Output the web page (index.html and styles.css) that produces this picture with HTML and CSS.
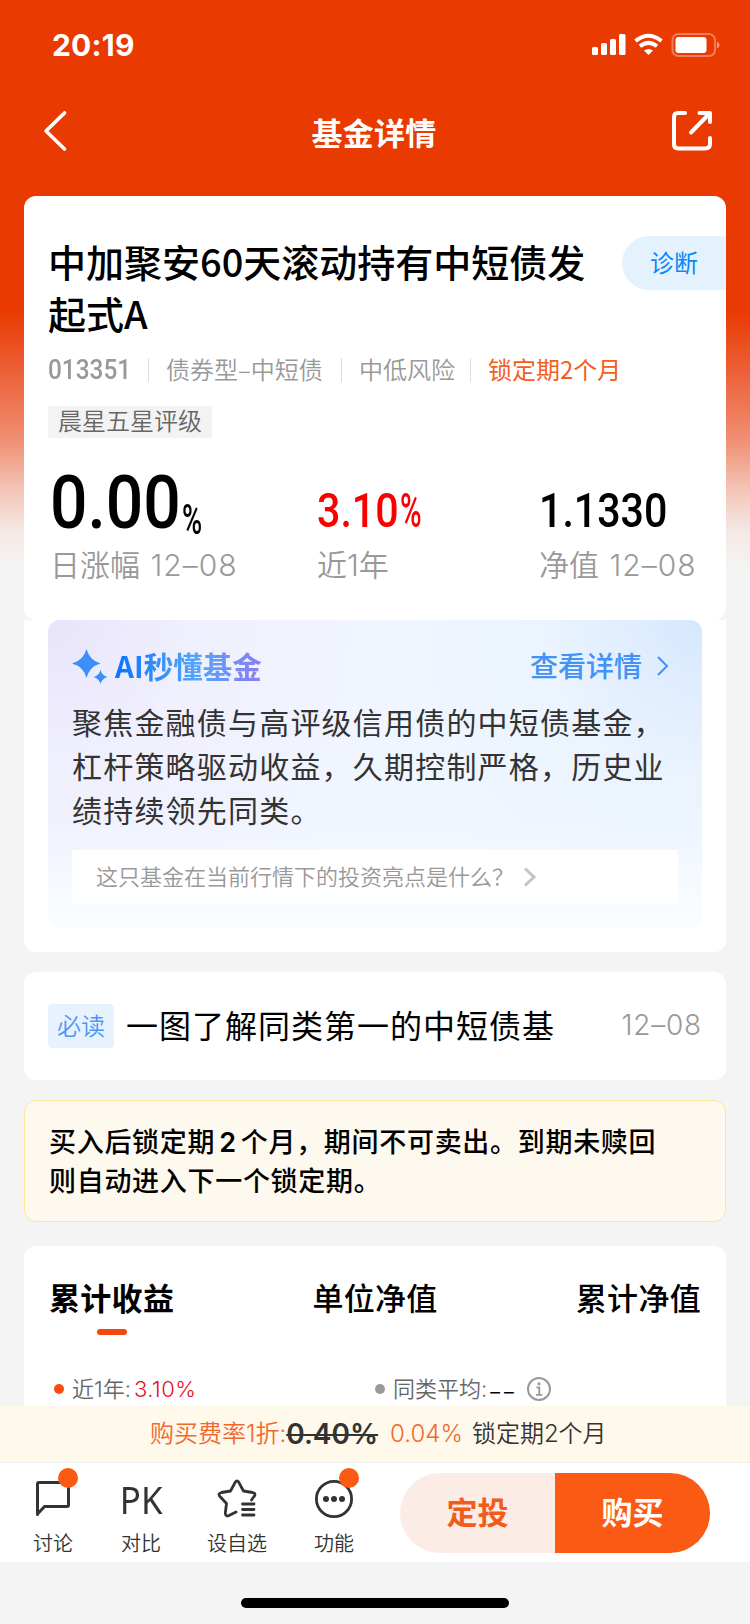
FILE: index.html
```html
<!DOCTYPE html>
<html lang="zh-CN">
<head>
    <meta charset="UTF-8">
    <meta name="viewport" content="width=device-width, initial-scale=1.0">
    <title>基金详情</title>
    <link rel="stylesheet" href="styles.css">
</head>
<body>
    <div class="content">
        <!-- 状态栏 -->
        <div class="status-bar">
            <span class="time">20:19</span>
            <svg class="status-icons" width="128" height="24" viewBox="0 0 128 24">
                <g fill="#fff">
                    <rect x="0" y="14" width="6" height="8" rx="1.5"/>
                    <rect x="9" y="10" width="6" height="12" rx="1.5"/>
                    <rect x="18" y="6" width="6" height="16" rx="1.5"/>
                    <rect x="27" y="1" width="6.500" height="21" rx="1.500"/>
                    <path d="M56.500 22 L52 17.500 Q56.500 14.500 61 17.500 Z"/>
                    <rect x="83.500" y="4" width="31" height="16" rx="3"/>
                    <path d="M125 8.500 Q127.500 9.500 127.500 12 Q127.500 14.500 125 15.500 Z" opacity=".5"/>
                </g>
                <path d="M43.500 8 Q56.500 -2.500 69.500 8 M48 13.200 Q56.500 6.500 65 13.200" fill="none" stroke="#fff" stroke-width="4"/>
                <rect x="80.500" y="1" width="42.500" height="22" rx="6" fill="none" stroke="#fff" stroke-opacity=".35" stroke-width="2"/>
            </svg>
        </div>

        <!-- 导航 -->
        <div class="nav-bar">
            <svg width="26" height="44" viewBox="0 0 26 44">
                <path d="M21.500 4 L3 22 L21.500 40" fill="none" stroke="#fff" stroke-width="3.600" stroke-linecap="round" stroke-linejoin="round"/>
            </svg>
            <h1>基金详情</h1>
            <svg width="42" height="42" viewBox="0 0 42 42" fill="none" stroke="#fff" stroke-width="4" stroke-linecap="round" stroke-linejoin="round">
                <path d="M14 3 H7 Q3 3 3 7 V34 Q3 38.500 7 38.500 H34 Q39 38.500 39 34 V28"/>
                <path d="M28.500 3 H39 V12 M38 4 L20 22.500"/>
            </svg>
        </div>

        <!-- 基金信息 -->
        <div class="card fund-card">
            <div class="fund-head">
                <h2>中加聚安60天滚动持有中短债发起式A</h2>
                <span class="diagnose">诊断</span>
            </div>
            <div class="meta">
                <span class="code"><span class="din din-code">013351</span></span>
                <span class="meta-type">债券型–中短债</span>
                <span class="meta-risk">中低风险</span>
                <span class="meta-lock">锁定期2个月</span>
            </div>
            <span class="tag">晨星五星评级</span>
            <div class="stats">
                <div class="stat stat-day">
                    <div class="num num-day"><span class="din din-big">0.00</span><span class="din din-unit">%</span></div>
                    <div class="label">日涨幅 <span class="date">12–08</span></div>
                </div>
                <div class="stat stat-year">
                    <div class="num red"><span class="din din-mid">3.10</span><span class="din din-pct">%</span></div>
                    <div class="label">近1年</div>
                </div>
                <div class="stat">
                    <div class="num"><span class="din din-mid">1.1330</span></div>
                    <div class="label">净值 <span class="date">12–08</span></div>
                </div>
            </div>
        </div>

        <!-- AI 解读 -->
        <div class="ai-card">
            <div class="ai-panel">
                <div class="ai-head">
                    <svg width="36" height="36" viewBox="0 0 36 36" fill="#3b8ff8">
                        <path d="M14.500 0 Q17.500 11.500 28.500 14.500 Q17.500 17.500 14.500 29 Q11.500 17.500 0 14.500 Q11.500 11.500 14.500 0 Z"/>
                        <path d="M28.500 21 Q30 26.500 35.500 28 Q30 29.500 28.500 35 Q27 29.500 21.500 28 Q27 26.500 28.500 21 Z"/>
                    </svg>
                    <span class="ai-title">AI秒懂基金</span>
                    <span class="ai-more">查看详情</span>
                    <svg class="ai-arrow" width="12" height="20" viewBox="0 0 12 20">
                        <path d="M1 1 L10 10 L1 19" fill="none" stroke="#4293f5" stroke-width="2"/>
                    </svg>
                </div>
                <p class="ai-text">聚焦金融债与高评级信用债的中短债基金，杠杆策略驱动收益，久期控制严格，历史业绩持续领先同类。</p>
                <div class="ai-question">
                    <span>这只基金在当前行情下的投资亮点是什么？</span>
                    <svg width="14" height="20" viewBox="0 0 14 20">
                        <path d="M2 1.500 L11 10 L2 18.500" fill="none" stroke="#c4c4c4" stroke-width="3"/>
                    </svg>
                </div>
            </div>
        </div>

        <div class="card article">
            <span class="badge">必读</span>
            <span class="article-title">一图了解同类第一的中短债基</span>
            <span class="article-date">12–08</span>
        </div>

        <div class="notice">买入后锁定期<span class="months">2</span>个月，期间不可卖出。到期未赎回<br>则自动进入下一个锁定期。</div>

        <!-- 收益走势 -->
        <div class="card chart-card">
            <div class="tabs">
                <span class="tab active">累计收益</span>
                <span class="tab">单位净值</span>
                <span class="tab">累计净值</span>
            </div>
            <div class="legend">
                <div class="legend-item">
                    <i class="dot"></i><span>近1年:</span><span class="legend-red">3.10%</span>
                </div>
                <div class="legend-item">
                    <i class="dot grey"></i><span>同类平均:</span><span class="legend-none">––</span>
                    <svg width="26" height="26" viewBox="0 0 26 26">
                        <circle cx="13" cy="13" r="11" fill="none" stroke="#999" stroke-width="2"/>
                        <circle cx="13" cy="7.800" r="1.600" fill="#999"/>
                        <path d="M10.500 11.500 H13.300 V18.500 M10 18.800 H16.300" fill="none" stroke="#999" stroke-width="1.800"/>
                    </svg>
                </div>
            </div>
        </div>
    </div>

    <!-- 费率 -->
    <div class="fee-bar">
        <span class="fee-label">购买费率1折:</span><del>0.40%</del><span class="fee-now">0.04%</span><span class="fee-lock">锁定期2个月</span>
    </div>

    <!-- 底部操作栏 -->
    <div class="bottom-bar">
        <div class="action action-talk">
            <div class="icon">
                <svg width="40" height="40" viewBox="0 0 40 40">
                    <path d="M4.500 35.500 V5 Q4.500 3.500 6 3.500 H34 Q35.500 3.500 35.500 5 V26 Q35.500 27.500 34 27.500 H11.500 L4.500 35 Z" fill="none" stroke="#333" stroke-width="3" stroke-linejoin="round"/>
                </svg>
                <i class="red-dot"></i>
            </div>
            <span>讨论</span>
        </div>
        <div class="action action-pk">
            <div class="icon"><span class="pk">PK</span></div>
            <span>对比</span>
        </div>
        <div class="action action-star">
            <div class="icon">
                <svg width="40" height="40" viewBox="0 0 40 40" fill="none" stroke="#333" stroke-width="2.800" stroke-linecap="round" stroke-linejoin="round">
                    <path d="M34.500 21 L37 17.500 Q39.500 14.500 35.500 13.500 L26.500 12 L21.800 3.300 Q20 .500 18.200 3.300 L13.500 12 L4.500 13.500 Q.500 14.500 3 17.500 L9.500 24.500 L8.300 34 Q8.300 38 12 36.500 L19 33"/>
                    <path d="M25.500 25 H37 M25.500 30.500 H37 M25.500 36 H37"/>
                </svg>
            </div>
            <span>设自选</span>
        </div>
        <div class="action action-more">
            <div class="icon">
                <svg width="40" height="40" viewBox="0 0 40 40">
                    <circle cx="20" cy="20" r="17.600" fill="none" stroke="#333" stroke-width="2.800"/>
                    <g fill="#333">
                        <circle cx="12" cy="20" r="3"/>
                        <circle cx="20" cy="20" r="3"/>
                        <circle cx="28" cy="20" r="3"/>
                    </g>
                </svg>
                <i class="red-dot"></i>
            </div>
            <span>功能</span>
        </div>
        <div class="buttons">
            <div class="btn-plan">定投</div>
            <div class="btn-buy">购买</div>
        </div>
    </div>
    <div class="home-area"><div class="home-line"></div></div>
</body>
</html>
```
FILE: styles.css
```css
* {
    box-sizing: border-box;
}

body {
    margin: 0;
    width: 750px;
    height: 1624px;
    overflow: hidden;
    display: flex;
    flex-direction: column;
    font-family: "Noto Sans CJK SC", sans-serif;
    color: #000;
    background: #f4f4f4;
}

h1, h2, p {
    margin: 0;
}

svg {
    display: block;
    flex: none;
}

span {
    white-space: nowrap;
}

.content {
    height: 1406px;
    flex: none;
    overflow: hidden;
    padding: 0 24px;
    background: linear-gradient(#e93a02 0, #e93a02 310px, #ec5f36 370px, #f08f73 440px, #f3c5b7 490px, #f4e8e4 530px, #f4f4f4 570px);
}

.status-bar {
    height: 88px;
    padding: 0 6px 0 28px;
    display: flex;
    justify-content: space-between;
    align-items: center;
}

.time {
    margin-top: 2px;
    font-family: Inter, sans-serif;
    font-size: 30px;
    font-weight: 700;
    letter-spacing: .2px;
    color: #fff;
}

.status-icons {
    margin-top: 2px;
}

.nav-bar {
    height: 108px;
    padding: 0 13px 22px 19px;
    display: flex;
    justify-content: space-between;
    align-items: center;
}

.nav-bar h1 {
    padding: 1px 0 0 8px;
    font-size: 31px;
    font-weight: 700;
    letter-spacing: .3px;
    line-height: 40px;
    color: #fff;
}

.card {
    background: #fff;
    border-radius: 12px;
}

/* 基金信息 */
.fund-card {
    height: 424px;
    padding: 40px 0 0 24px;
}

.fund-head {
    height: 104px;
    display: flex;
    justify-content: space-between;
    align-items: flex-start;
}

.fund-head h2 {
    width: 550px;
    margin-top: -1px;
    font-size: 38px;
    font-weight: 500;
    line-height: 52px;
}

.diagnose {
    width: 104px;
    height: 54px;
    padding-left: 28px;
    line-height: 51px;
    font-size: 24px;
    color: #0c86f5;
    background: #e4f2fe;
    border-radius: 27px 0 0 27px;
}

.meta {
    height: 24px;
    margin-top: 18px;
    display: flex;
    line-height: 22px;
    font-size: 24px;
    font-weight: 350;
    color: #999;
}

.meta > span + span {
    padding-left: 17px;
    border-left: 1px solid #ddd;
}

.code {
    width: 100px;
}

.meta-type {
    width: 193px;
}

.meta-risk {
    width: 129px;
}

.meta .meta-lock {
    font-weight: 400;
    color: #f2601f;
}

.tag {
    display: block;
    width: 164px;
    height: 32px;
    margin-top: 24px;
    padding-left: 10px;
    line-height: 28px;
    font-size: 24px;
    font-weight: 350;
    color: #666;
    background: #f3f3f3;
}

.stats {
    margin-top: 24px;
    display: flex;
}

.stat {
    padding-left: 2px;
}

.stat-day {
    width: 267px;
}

.stat-year {
    width: 222px;
}

.num {
    height: 81px;
    line-height: 98px;
    white-space: nowrap;
}

.num-day {
    line-height: 81px;
}

.red {
    color: #fa0000;
}

/* 窄体数字 */
.din {
    display: inline-block;
    font-family: Roboto, sans-serif;
    font-weight: 500;
    transform-origin: 0 50%;
}

.din-code {
    font-size: 28px;
    line-height: 22px;
    transform: scaleX(.87);
}

.din-big {
    width: 132px;
    font-size: 75px;
    transform: scaleX(.88);
}

.din-mid {
    font-size: 49px;
    transform: scaleX(.84);
}

.din-pct {
    font-size: 49px;
    font-weight: 500;
    margin-left: -14px;
    transform: scaleX(.6);
}

.din-unit {
    font-size: 42px;
    line-height: 40px;
    vertical-align: -6px;
    transform: scaleX(.65);
}

.label {
    line-height: 44px;
    font-family: Inter, "Noto Sans CJK SC", sans-serif;
    font-size: 30px;
    font-weight: 350;
    color: #999;
}

.date {
    margin-left: 2px;
    letter-spacing: 1px;
}

/* AI 解读 */
.ai-card {
    height: 332px;
    padding: 0 24px;
    background: #fff;
    border-radius: 0 0 12px 12px;
}

.ai-panel {
    height: 308px;
    padding: 22px 24px 24px;
    border-radius: 12px;
    background:
        linear-gradient(rgba(250, 253, 255, 0) 65%, #fafdff 98%),
        radial-gradient(circle at 100% 0, #d6e8fe 0, rgba(230, 241, 254, .5) 22%, rgba(230, 241, 254, 0) 45%),
        radial-gradient(circle at 0 0, #e8e4fb 0, rgba(240, 238, 253, .8) 20%, rgba(243, 242, 254, 0) 50%),
        #f0f6ff;
}

.ai-head {
    height: 46px;
    display: flex;
    align-items: center;
}

.ai-head svg:first-child {
    margin-top: 4px;
}

.ai-title {
    margin-left: 7px;
    font-size: 29.500px;
    font-weight: 700;
    color: transparent;
    background: linear-gradient(90deg, #0c74fb, #55a5f7 55%, #8b7df0);
    -webkit-background-clip: text;
    background-clip: text;
}

.ai-more {
    margin-left: auto;
    font-size: 28px;
    font-weight: 500;
    color: #4293f5;
}

.ai-arrow {
    margin: 2px 9px 0 15px;
}

.ai-text {
    margin-top: 11px;
    font-size: 30px;
    letter-spacing: 1.200px;
    line-height: 44px;
    color: #333;
}

.ai-question {
    height: 54px;
    margin-top: 19px;
    padding: 0 0 1px 24px;
    display: flex;
    align-items: center;
    gap: 9px;
    line-height: 50px;
    font-size: 22px;
    font-weight: 350;
    color: #999;
    background: #fff;
}

.ai-question span {
    margin-top: -4px;
}

.article {
    height: 108px;
    margin-top: 20px;
    padding: 0 24px;
    display: flex;
    align-items: center;
}

.badge {
    width: 66px;
    height: 44px;
    line-height: 41px;
    text-align: center;
    font-size: 24px;
    font-weight: 350;
    color: #4b97f5;
    background: #e8f2ff;
    border-radius: 4px;
}

.article-title {
    margin: -5px 0 0 12px;
    font-size: 32px;
    letter-spacing: 1px;
}

.article-date {
    margin: -2px 0 0 auto;
    font-family: Inter, sans-serif;
    font-size: 28px;
    font-weight: 350;
    letter-spacing: .800px;
    color: #999;
}

.notice {
    height: 122px;
    margin-top: 20px;
    padding: 20px 24px;
    font-size: 27px;
    letter-spacing: .700px;
    font-weight: 500;
    line-height: 39px;
    background: #fef9ef;
    border: 1px solid #fbe69a;
    border-radius: 12px;
}

.months {
    margin: 0 4px;
    font-family: Inter, sans-serif;
    font-weight: 600;
    line-height: 1;
}

/* 收益走势 */
.chart-card {
    height: 200px;
    margin-top: 24px;
    padding: 31px 25px 0;
}

.tabs {
    display: flex;
    justify-content: space-between;
}

.tab {
    height: 60px;
    font-size: 31px;
    font-weight: 500;
    letter-spacing: .3px;
    line-height: 40px;
}

.active {
    font-weight: 700;
}

.active::after {
    content: "";
    display: block;
    width: 30px;
    height: 6px;
    margin: 12px auto 0;
    background: #f5480f;
    border-radius: 3px;
}

.legend {
    margin-top: 36px;
    padding-left: 5px;
    display: flex;
    line-height: 32px;
    font-family: Inter, "Noto Sans CJK SC", sans-serif;
    font-size: 22px;
    font-weight: 350;
    color: #666;
}

.legend-item {
    width: 321px;
    display: flex;
    align-items: center;
}

.legend-item svg {
    margin-left: 9px;
}

.dot {
    width: 10px;
    height: 10px;
    margin-right: 8px;
    border-radius: 50%;
    background: #fa4a0c;
}

.grey {
    background: #999;
}

.legend-red {
    margin-left: 3px;
    letter-spacing: .5px;
    color: #e5101c;
}

.legend-none {
    margin-left: 2px;
    font-family: "Noto Sans CJK SC", sans-serif;
    font-weight: 400;
    letter-spacing: 2px;
    color: #000;
}

/* 费率 */
.fee-bar {
    height: 57px;
    flex: none;
    padding-left: 150px;
    display: flex;
    align-items: center;
    line-height: 54px;
    font-family: Inter, "Noto Sans CJK SC", sans-serif;
    font-size: 24px;
    font-weight: 350;
    color: #333;
    background: #fff9ec;
    border-bottom: 1px solid #eee;
}

.fee-label, .fee-now {
    color: #f2682c;
}

.fee-bar del {
    font-size: 28px;
    font-weight: 600;
}

.fee-now {
    margin-left: 12px;
}

.fee-lock {
    margin-left: 9px;
}

/* 底部操作栏 */
.bottom-bar {
    height: 99px;
    flex: none;
    padding-left: 24px;
    display: flex;
    background: #fff;
}

.action {
    padding-top: 16px;
    display: flex;
    flex-direction: column;
    align-items: center;
    line-height: 28px;
    font-size: 20px;
    font-weight: 350;
    color: #333;
}

.action-talk {
    width: 58px;
}

.action-pk {
    width: 118px;
}

.action-star {
    width: 74px;
}

.action-more {
    width: 120px;
}

.icon {
    position: relative;
    height: 50px;
}

.red-dot {
    position: absolute;
    top: -11px;
    right: -5px;
    width: 20px;
    height: 20px;
    border-radius: 50%;
    background: #fb5a14;
}

.pk {
    display: block;
    line-height: 40px;
    font-family: "Noto Sans", sans-serif;
    font-size: 38px;
    font-weight: 400;
    transform: scaleX(.92);
}

.buttons {
    width: 310px;
    height: 80px;
    margin: 10px 0 0 6px;
    display: flex;
    border-radius: 40px;
    overflow: hidden;
    text-align: center;
    line-height: 76px;
    font-size: 31px;
    font-weight: 700;
}

.btn-plan {
    width: 155px;
    color: #f25c1a;
    background: #fcece6;
}

.btn-buy {
    width: 155px;
    color: #fff;
    background: #fb5a14;
}

.home-area {
    height: 62px;
    padding-top: 36px;
}

.home-line {
    width: 268px;
    height: 10px;
    margin: 0 auto;
    border-radius: 5px;
    background: #000;
}
```
